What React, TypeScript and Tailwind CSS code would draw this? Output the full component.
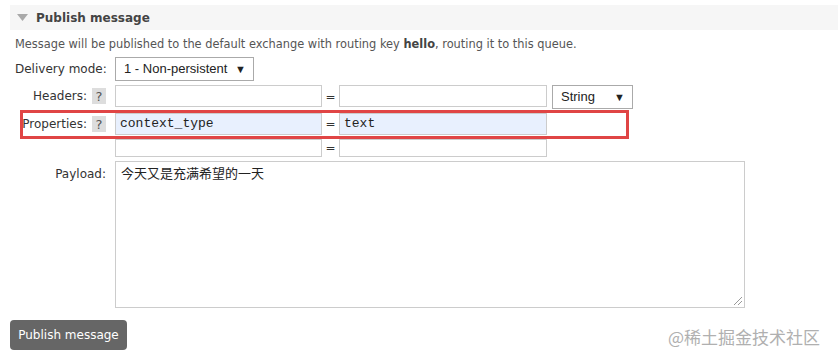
import React from "react";

const verdana = { fontFamily: '"DejaVu Sans", Verdana, sans-serif' };

function Help() {
  return (
    <span className="inline-flex h-[16px] w-[14px] items-center justify-center bg-[#dddddd] text-[13px] leading-none text-[#555]">
      ?
    </span>
  );
}

function Input({ value = "", blue = false, w, h = "h-[22px]" }: { value?: string; blue?: boolean; w: string; h?: string }) {
  return (
    <div
      className={`${w} ${h} flex items-center border border-[#cccccc] px-[4px] text-[13px] text-[#222] ${blue ? "bg-[#e8f0fe]" : "bg-white"}`}
      style={{ fontFamily: '"Liberation Mono", monospace' }}
    >
      {value}
    </div>
  );
}

export default function App() {
  return (
    <div className="relative h-[359px] w-[838px] overflow-hidden bg-white text-[#444]" style={verdana}>
      <div className="pt-[5px] pl-[10px]">
        <div className="flex h-[25px] items-center bg-[#f6f6f6] pl-[7px]">
          <svg width="11" height="7" viewBox="0 0 11 7" className="mr-[8px]">
            <polygon points="0,0 11,0 5.5,7" fill="#a9a9a9" />
          </svg>
          <span className="text-[12px] font-bold text-[#444]">Publish message</span>
        </div>
      </div>
      <div className="whitespace-nowrap pl-[15px] pt-[7px] text-[11.4px] leading-[15px] text-[#555]">
        Message will be published to the default exchange with routing key <b className="text-[#444]">hello</b>, routing it to this queue.
      </div>
      <div className="mt-[5px] flex flex-col pl-[15px] text-[12px] text-[#333]">
        <div className="flex items-center">
          <div className="w-[100px]">Delivery mode:</div>
          <div
            className="flex h-[24px] w-[139px] items-center justify-between whitespace-nowrap border border-[#aaa] bg-white pl-[8px] pr-[7px] text-[13px] text-[#222]"
            style={{ fontFamily: '"Liberation Sans", Arial, sans-serif' }}
          >
            <span>1 - Non-persistent</span>
            <span className="text-[11px]">▼</span>
          </div>
        </div>
        <div className="mt-[4px] flex items-start">
          <div className="flex h-[22px] w-[100px] items-center justify-end gap-[5px] pr-[9px]">
            <span>Headers:</span>
            <Help />
          </div>
          <Input w="w-[207px]" />
          <span className="w-[17px] pt-[3px] text-center text-[12px]">=</span>
          <Input w="w-[208px]" />
          <div
            className="ml-[5px] flex h-[24px] w-[81px] items-center justify-between border border-[#aaa] bg-white pl-[8px] pr-[7px] text-[13px] text-[#222]"
            style={{ fontFamily: '"Liberation Sans", Arial, sans-serif' }}
          >
            <span>String</span>
            <span className="text-[11px]">▼</span>
          </div>
        </div>
        <div className="mt-[4px] flex items-center">
          <div className="flex h-[22px] w-[100px] items-center justify-end gap-[5px] pr-[9px]">
            <span>Properties:</span>
            <Help />
          </div>
          <Input w="w-[207px]" value="context_type" blue />
          <span className="w-[17px] text-center text-[12px]">=</span>
          <Input w="w-[208px]" value="text" blue />
        </div>
        <div className="mt-[4px] flex items-center">
          <div className="w-[100px]" />
          <Input w="w-[207px]" h="h-[18px]" />
          <span className="w-[17px] text-center text-[12px]">=</span>
          <Input w="w-[208px]" h="h-[18px]" />
        </div>
        <div className="mt-[4px] flex items-start">
          <div className="w-[100px] pr-[9px] pt-[4px] text-right">Payload:</div>
          <div
            className="relative h-[147px] w-[630px] border border-[#cccccc] px-[5px] pt-[1px] text-[13px] text-[#222]"
            style={{ fontFamily: '"Noto Sans CJK SC", sans-serif' }}
          >
            今天又是充满希望的一天
            <svg width="10" height="10" viewBox="0 0 10 10" className="absolute bottom-[1px] right-[1px]">
              <line x1="9" y1="1" x2="1" y2="9" stroke="#999" strokeWidth="1" />
              <line x1="9" y1="5" x2="5" y2="9" stroke="#999" strokeWidth="1" />
            </svg>
          </div>
        </div>
      </div>
      <div className="pl-[10px] pt-[12px]">
        <button className="h-[30px] w-[117px] rounded-[4px] bg-[#666666] text-[12px] text-white" style={verdana}>
          Publish message
        </button>
      </div>
      <div className="pointer-events-none absolute left-[20px] top-[110px] h-[29px] w-[609px] border-[3px] border-[#e04545]" />
      <div
        className="absolute left-[668px] top-[324px] text-[17px] text-[#b0b0b0]"
        style={{ fontFamily: '"Noto Sans CJK SC", sans-serif' }}
      >
        @稀土掘金技术社区
      </div>
    </div>
  );
}
